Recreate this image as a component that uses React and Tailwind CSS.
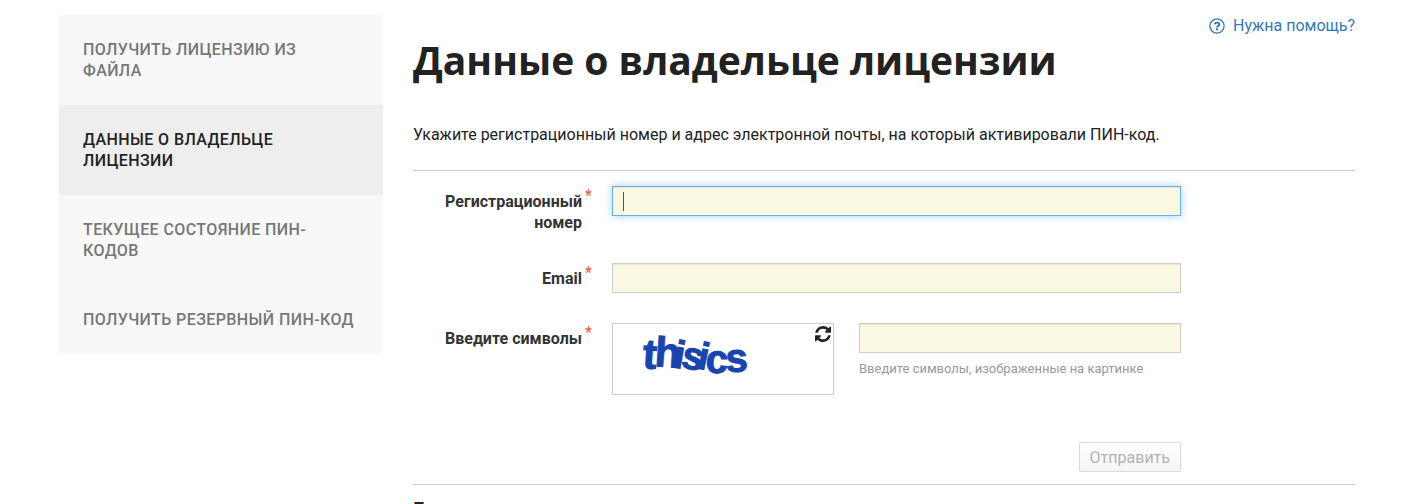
const menuItems = [
  { label: "Получить лицензию из файла" },
  { label: "Данные о владельце лицензии", active: true },
  { label: "Текущее состояние ПИН-кодов" },
  { label: "Получить резервный ПИН-код" },
];

const captchaLetters = [
  { char: "t", x: 29, y: 44, size: 42, angle: 4 },
  { char: "h", x: 41, y: 42, size: 42, angle: 4 },
  { char: "i", x: 59, y: 43, size: 39, angle: 10 },
  { char: "s", x: 67, y: 43, size: 39, angle: 12 },
  { char: "i", x: 83, y: 44, size: 38, angle: 12 },
  { char: "c", x: 92, y: 48, size: 40, angle: 4 },
  { char: "s", x: 113, y: 48, size: 40, angle: -2 },
];

function HelpIcon() {
  return (
    <svg viewBox="0 0 16 16" className="h-4 w-4" fill="none" stroke="currentColor" aria-hidden="true">
      <circle cx="8" cy="8" r="7.1" strokeWidth="1.3" />
      <path d="M5.600 6.300C6 5.100 6.900 4.600 8 4.600c1.300 0 2.300.700 2.300 1.800C10.300 7.900 8 7.900 8 9.500" strokeWidth="1.900" />
      <path d="M8 10.300v2" strokeWidth="2.100" />
    </svg>
  );
}

function RefreshIcon() {
  return (
    <svg viewBox="0 0 1536 1536" className="h-4 w-4" fill="currentColor" aria-hidden="true">
      <path d="M1511 928q0 5-1 7-64 268-268 434.500T764 1536q-146 0-282.500-55T238 1324l-129 129q-19 19-45 19t-45-19-19-45V960q0-26 19-45t45-19h448q26 0 45 19t19 45-19 45l-137 137q71 66 161 102t187 36q134 0 250-65t186-179q11-17 53-117 8-23 30-23h192q13 0 22.500 9.500t9.500 22.500zm25-800v448q0 26-19 45t-45 19h-448q-26 0-45-19t-19-45 19-45l138-138Q969 256 768 256q-134 0-250 65T332 500q-11 17-53 117-8 23-30 23H50q-13 0-22.500-9.500T18 608v-7q65-268 270-434.500T768 0q146 0 284 55.500T1297 212l130-129q19-19 45-19t45 19 19 45z" />
    </svg>
  );
}

function FieldLabel({ htmlFor, children }) {
  return (
    <label htmlFor={htmlFor} className="relative pt-[5px] text-right font-bold leading-[21px] text-[#333]">
      {children}
      <span className="absolute -right-[10px] -top-px font-normal text-[#ff5533]">*</span>
    </label>
  );
}

function TextField({ id, type = "text", focused }) {
  return (
    <div className="relative">
      <input
        id={id}
        type={type}
        className={`block h-[30px] w-full border bg-[#fbf8e1] px-[10px] outline-none ${
          focused
            ? "border-[#66afe9] shadow-[inset_0_1px_1px_rgba(0,0,0,0.075),0_0_8px_rgba(102,175,233,0.6)]"
            : "border-[#ccc] shadow-[inset_0_1px_1px_rgba(0,0,0,0.075)]"
        }`}
      />
      {focused && <span className="absolute left-[11px] top-[6px] h-[19px] w-px bg-[#555]" />}
    </div>
  );
}

export default function App() {
  return (
    <div className="flex h-screen items-start gap-[30px] overflow-hidden bg-white pl-[59px] pr-[70px] pt-[15px] font-[Roboto,sans-serif] text-base text-[#222]">
      <nav className="w-1/4 shrink-0 overflow-hidden rounded-[5px] bg-[#f8f8f8]">
        {menuItems.map((item) => (
          <a
            key={item.label}
            href="#"
            className={`block p-6 font-medium uppercase leading-[21px] tracking-wide ${
              item.active ? "bg-[#eee] text-[#222]" : "text-[#777]"
            }`}
          >
            {item.label}
          </a>
        ))}
      </nav>

      <main className="min-w-0 flex-1">
        <div className="flex items-start justify-between">
          <h1 className="pt-[17px] font-['Open_Sans',sans-serif] text-[39px] font-bold leading-[56px]">
            Данные о владельце лицензии
          </h1>
          <a href="#" className="flex items-center gap-2 leading-[21px] text-[#337ab7]">
            <HelpIcon />
            Нужна помощь?
          </a>
        </div>
        <p className="mt-9 leading-[21px]">
          Укажите регистрационный номер и адрес электронной почты, на который активировали ПИН-код.
        </p>

        <form className="mt-[25px] border-y border-[#ccc] pb-3 pr-[174px] pt-[15px]">
          <div className="grid grid-cols-[169px_1fr] gap-x-[30px] gap-y-[30px]">
            <FieldLabel htmlFor="reg-number">Регистрационный номер</FieldLabel>
            <TextField id="reg-number" focused />

            <FieldLabel htmlFor="email">Email</FieldLabel>
            <TextField id="email" type="email" />

            <FieldLabel htmlFor="captcha">Введите символы</FieldLabel>
            <div className="flex items-start gap-[25px]">
              <div className="relative h-[72px] w-[222px] shrink-0 border border-[#ccc]">
                <svg viewBox="0 0 220 70" className="h-full w-full" role="img" aria-label="thisics">
                  <g
                    fill="#1744b0"
                    stroke="#1744b0"
                    strokeWidth="1"
                    fontFamily="Liberation Sans Narrow, Liberation Sans, sans-serif"
                    fontWeight="700"
                  >
                    {captchaLetters.map(({ char, x, y, size, angle }, index) => (
                      <text key={index} x={x} y={y} fontSize={size} transform={`rotate(${angle} ${x} ${y})`}>
                        {char}
                      </text>
                    ))}
                  </g>
                </svg>
                <button type="button" aria-label="Обновить" className="absolute right-[2px] top-[2px]">
                  <RefreshIcon />
                </button>
              </div>
              <div className="min-w-0 flex-1">
                <TextField id="captcha" />
                <p className="mt-[6px] text-[13px] leading-5 text-[#999]">Введите символы, изображенные на картинке</p>
              </div>
            </div>
          </div>
          <div className="mt-[47px] flex justify-end">
            <button
              type="submit"
              disabled
              className="h-[30px] rounded-[2px] border border-[#d9d9d9] bg-linear-to-b from-white to-[#f5f5f5] px-[10px] leading-[21px] text-[#b3b3b3]"
            >
              Отправить
            </button>
          </div>
        </form>

        <h2 className="mt-[11px] font-['Open_Sans',sans-serif] text-base font-bold leading-6">П</h2>
      </main>
    </div>
  );
}
